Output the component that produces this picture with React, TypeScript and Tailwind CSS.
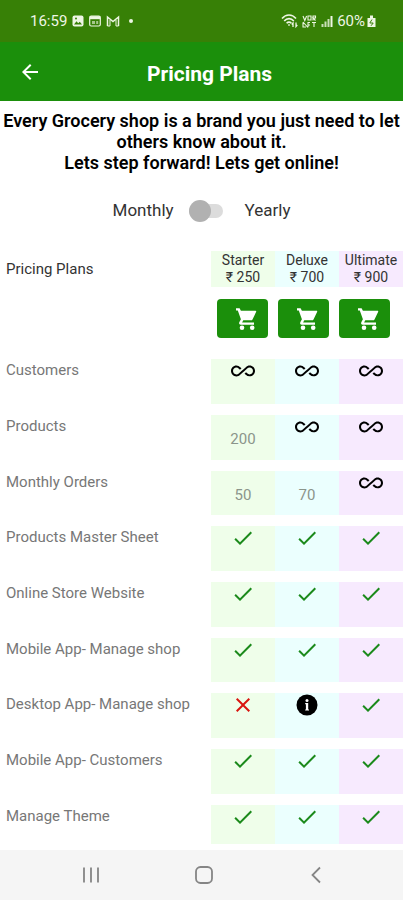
/**
 * Pricing screen: plan comparison table with a monthly / yearly switch
 */
import { useState } from "react";
import { MdAllInclusive, MdArrowBack, MdCheck, MdClose } from "react-icons/md";

const plans = [
  { name: "Starter", price: "₹ 250", bg: "bg-[#effeea]" },
  { name: "Deluxe", price: "₹ 700", bg: "bg-[#ebfffe]" },
  { name: "Ultimate", price: "₹ 900", bg: "bg-[#f7eafe]" },
];

const features = [
  { label: "Customers", values: ["all", "all", "all"] },
  { label: "Products", values: ["200", "all", "all"] },
  { label: "Monthly Orders", values: ["50", "70", "all"] },
  { label: "Products Master Sheet", values: ["yes", "yes", "yes"] },
  { label: "Online Store Website", values: ["yes", "yes", "yes"] },
  { label: "Mobile App- Manage shop", values: ["yes", "yes", "yes"] },
  { label: "Desktop App- Manage shop", values: ["no", "info", "yes"] },
  { label: "Mobile App- Customers", values: ["yes", "yes", "yes"] },
  { label: "Manage Theme", values: ["yes", "yes", "yes"] },
];

function InfoIcon() {
  return (
    <svg viewBox="0 0 24 24" className="w-6 h-6 mx-auto" role="img" aria-label="More info">
      <circle cx="12" cy="12" r="10.5" fill="#000" />
      <circle cx="12" cy="7.4" r="1.5" fill="#fff" />
      <path d="M10.2 10h3v6.400h0.800v1.200h-3.800v-1.200h0.700v-5.200h-0.700z" fill="#fff" />
    </svg>
  );
}

function CartIcon() {
  return (
    <svg viewBox="0 0 24 24" className="w-6 h-6" fill="currentColor" aria-hidden="true">
      <path d="M2 1.200h3.600l1.300 2.600H21.500c0.600 0 0.900 0.500 0.700 1l-3.700 7.600c-0.300 0.600-0.800 0.900-1.500 0.900H9.300l-1.200 2.200H20v2.200H6.800c-1.400 0-2.100-1.300-1.500-2.500l1.600-2.900L3.800 3.400H2z" />
      <circle cx="8" cy="20.8" r="2.300" />
      <circle cx="18.200" cy="20.8" r="2.300" />
    </svg>
  );
}

function Value({ value }: { value: string }) {
  if (value === "all")
    return <MdAllInclusive className="w-[26px] h-6 mx-auto text-black" aria-label="Unlimited" />;
  if (value === "yes")
    return <MdCheck className="w-6 h-6 mx-auto text-[#1b8a1b]" aria-label="Included" />;
  if (value === "no")
    return <MdClose className="w-6 h-6 mx-auto text-[#d9150f]" aria-label="Not included" />;
  if (value === "info") return <InfoIcon />;
  return <span className="block pt-3 text-[15px] leading-6 text-[#8b958b]">{value}</span>;
}

function StatusBar() {
  return (
    <div className="h-[42px] pl-[30px] pr-[27px] flex items-center justify-between bg-[#378006] text-[#eef6e4] text-[15px]">
      <div className="flex items-center gap-[5px]">
        <span>16:59</span>
        <svg viewBox="0 0 12 12" className="w-3 h-3">
          <rect x="0.5" y="0.5" width="11" height="11" rx="2" fill="currentColor" />
          <path d="M2 9.5l2.5-3.2 1.7 1.9 1.6-1.4 2.2 2.7z" fill="#378006" />
          <circle cx="4" cy="3.6" r="1" fill="#378006" />
        </svg>
        <svg viewBox="0 0 12 12" className="w-3 h-3">
          <rect x="0.7" y="1.2" width="10.6" height="9.8" rx="1.5" fill="none" stroke="currentColor" strokeWidth="1.2" />
          <path d="M0.7 1.2h10.6v3H0.7z" fill="currentColor" />
          <path d="M3 6h3v3H3zM7.2 6h2v3h-2z" fill="currentColor" opacity="0.6" />
        </svg>
        <svg viewBox="0 0 14 12" className="w-[14px] h-3" fill="none" stroke="currentColor">
          <path d="M1.5 11V2l5.500 4.500L12.500 2v9" strokeWidth="1.500" />
          <path d="M4 11V5M10 11V5M1.500 11H4M10 11h2.500" strokeWidth="1" />
        </svg>
        <span className="w-1 h-1 ml-1 rounded-full bg-current" />
      </div>
      <div className="flex items-center gap-1">
        <svg viewBox="0 0 17 14" className="w-[17px] h-[14px]" fill="none" stroke="currentColor" strokeWidth="1.6">
          <path d="M1 4.500C5-0.200 11-0.200 15 4.500M3.200 7C6 3.800 10 3.800 12.800 7M5.600 9.300c1.500-1.600 3.300-1.600 4.800 0" />
          <path d="M8 10.200v1.500" />
          <path d="M12 13V9l-1.300 1.500M15 8.500v4l1.300-1.500" strokeWidth="1.300" />
        </svg>
        <svg viewBox="0 0 15 13" className="w-[15px] h-[13px]" fill="none" stroke="currentColor" strokeWidth="1.100">
          <path d="M1 1l1.800 4.500L4.600 1M6 1h3v4H6zM11 5.500V1h2.500v2H11l2.500 2.500" />
          <path d="M1 7.500v4.500h3M6 12V7.500h2M6 10h2M10 7.500h4M12 7.500V12M1 7l5 5.500" />
        </svg>
        <svg viewBox="0 0 12 12" className="w-3 h-3" fill="currentColor">
          <path d="M0.500 9h2v3h-2zM3.500 6.500h2V12h-2zM6.500 4h2v8h-2z" opacity="0.8" />
          <path d="M9.500 1h2v11h-2z" />
        </svg>
        <span>60%</span>
        <svg viewBox="0 0 9 12" className="w-[9px] h-3 -ml-[2px]">
          <path d="M3 0.500h3V3h2.500v9h-8V3H3z" fill="currentColor" />
          <path d="M5 4.500L2.800 8h3.400L4 10.800" fill="none" stroke="#378006" strokeWidth="1" />
        </svg>
      </div>
    </div>
  );
}

export default function App() {
  const [yearly, setYearly] = useState(false);

  return (
    <div className="min-h-screen flex flex-col bg-white font-['Roboto','Noto_Sans',sans-serif]">
      <StatusBar />

      {/* Title bar */}
      <header className="h-[59px] px-[18px] flex items-center bg-[#1b8f0b] text-white">
        <button type="button" aria-label="Back">
          <MdArrowBack className="w-6 h-6" />
        </button>
        <h1 className="flex-1 pr-2 pt-1 text-[21px] leading-6 font-bold text-center">
          Pricing Plans
        </h1>
      </header>

      <main className="flex-1">
        <p className="pt-[9px] text-lg leading-[21px] font-semibold text-center text-black">
          Every Grocery shop is a brand you just need to let others know about it.
          <br />
          Lets step forward! Lets get online!
        </p>

        {/* Billing period */}
        <div className="mt-[26px] h-6 flex items-center justify-center text-[17px] text-[#333]">
          <label htmlFor="period">Monthly</label>
          <input
            id="period"
            type="checkbox"
            role="switch"
            checked={yearly}
            onChange={(e) => setYearly(e.target.checked)}
            className="appearance-none w-[34px] h-[14px] ml-[15px] mr-[22px] rounded-full bg-[#dcdcdc] flex items-center before:content-[''] before:w-[22px] before:h-[22px] before:shrink-0 before:rounded-full before:bg-[#b1b1b1] checked:justify-end checked:before:bg-[#1b8f0b]"
          />
          <label htmlFor="period">Yearly</label>
        </div>

        {/* Plan comparison */}
        <table className="w-full mt-7 table-fixed border-separate border-spacing-0">
          <colgroup>
            <col />
            <col className="w-16" />
            <col className="w-16" />
            <col className="w-16" />
          </colgroup>
          <thead>
            <tr>
              <th scope="col" className="p-0 pl-[6px] text-left text-[15px] font-normal text-[#333]">
                Pricing Plans
              </th>
              {plans.map((plan) => (
                <th
                  key={plan.name}
                  scope="col"
                  className={`h-9 p-0 text-sm leading-[17px] font-normal text-[#333] ${plan.bg}`}
                >
                  {plan.name}
                  <br />
                  {plan.price}
                </th>
              ))}
            </tr>
            <tr>
              <td />
              <td colSpan={3} className="h-[72px] p-0 pl-[6px] pt-3 align-top">
                <div className="flex gap-[10px]">
                  {plans.map((plan) => (
                    <button
                      key={plan.name}
                      type="button"
                      aria-label={`Buy ${plan.name}`}
                      className="w-[51px] h-[39px] pl-[6px] flex items-center justify-center rounded bg-[#1b8f0b] text-white"
                    >
                      <CartIcon />
                    </button>
                  ))}
                </div>
              </td>
            </tr>
          </thead>
          <tbody>
            {features.map((feature, row) => {
              const last = row === features.length - 1;
              return (
                <tr key={feature.label} className={last ? "h-[45px]" : row % 3 === 2 ? "h-[55px]" : "h-14"}>
                  <th
                    scope="row"
                    className="p-0 pl-[6px] align-top text-left text-[15px] leading-[22px] font-normal text-[#777]"
                  >
                    {feature.label}
                  </th>
                  {feature.values.map((value, i) => (
                    <td
                      key={plans[i].name}
                      className={`p-0 border-white bg-clip-padding align-top text-center ${last ? "border-b-[6px]" : "border-b-[11px]"} ${plans[i].bg}`}
                    >
                      <Value value={value} />
                    </td>
                  ))}
                </tr>
              );
            })}
          </tbody>
        </table>
      </main>

      {/* System navigation */}
      <nav className="h-[50px] pl-[79px] pr-[75px] flex items-center justify-between bg-[#f5f5f5] text-[#858585]">
        <button type="button" aria-label="Recent apps">
          <svg viewBox="0 0 24 24" className="w-6 h-6" stroke="currentColor" strokeWidth="1.800">
            <path d="M5 4.500v15M12 4.500v15M19 4.500v15" />
          </svg>
        </button>
        <button type="button" aria-label="Home">
          <svg viewBox="0 0 24 24" className="w-6 h-6" fill="none" stroke="currentColor" strokeWidth="1.800">
            <rect x="4" y="4" width="16" height="16" rx="4.500" />
          </svg>
        </button>
        <button type="button" aria-label="Back">
          <svg viewBox="0 0 24 24" className="w-6 h-6" fill="none" stroke="currentColor" strokeWidth="1.800">
            <path d="M16 4.500L8.500 12l7.500 7.500" />
          </svg>
        </button>
      </nav>
    </div>
  );
}
